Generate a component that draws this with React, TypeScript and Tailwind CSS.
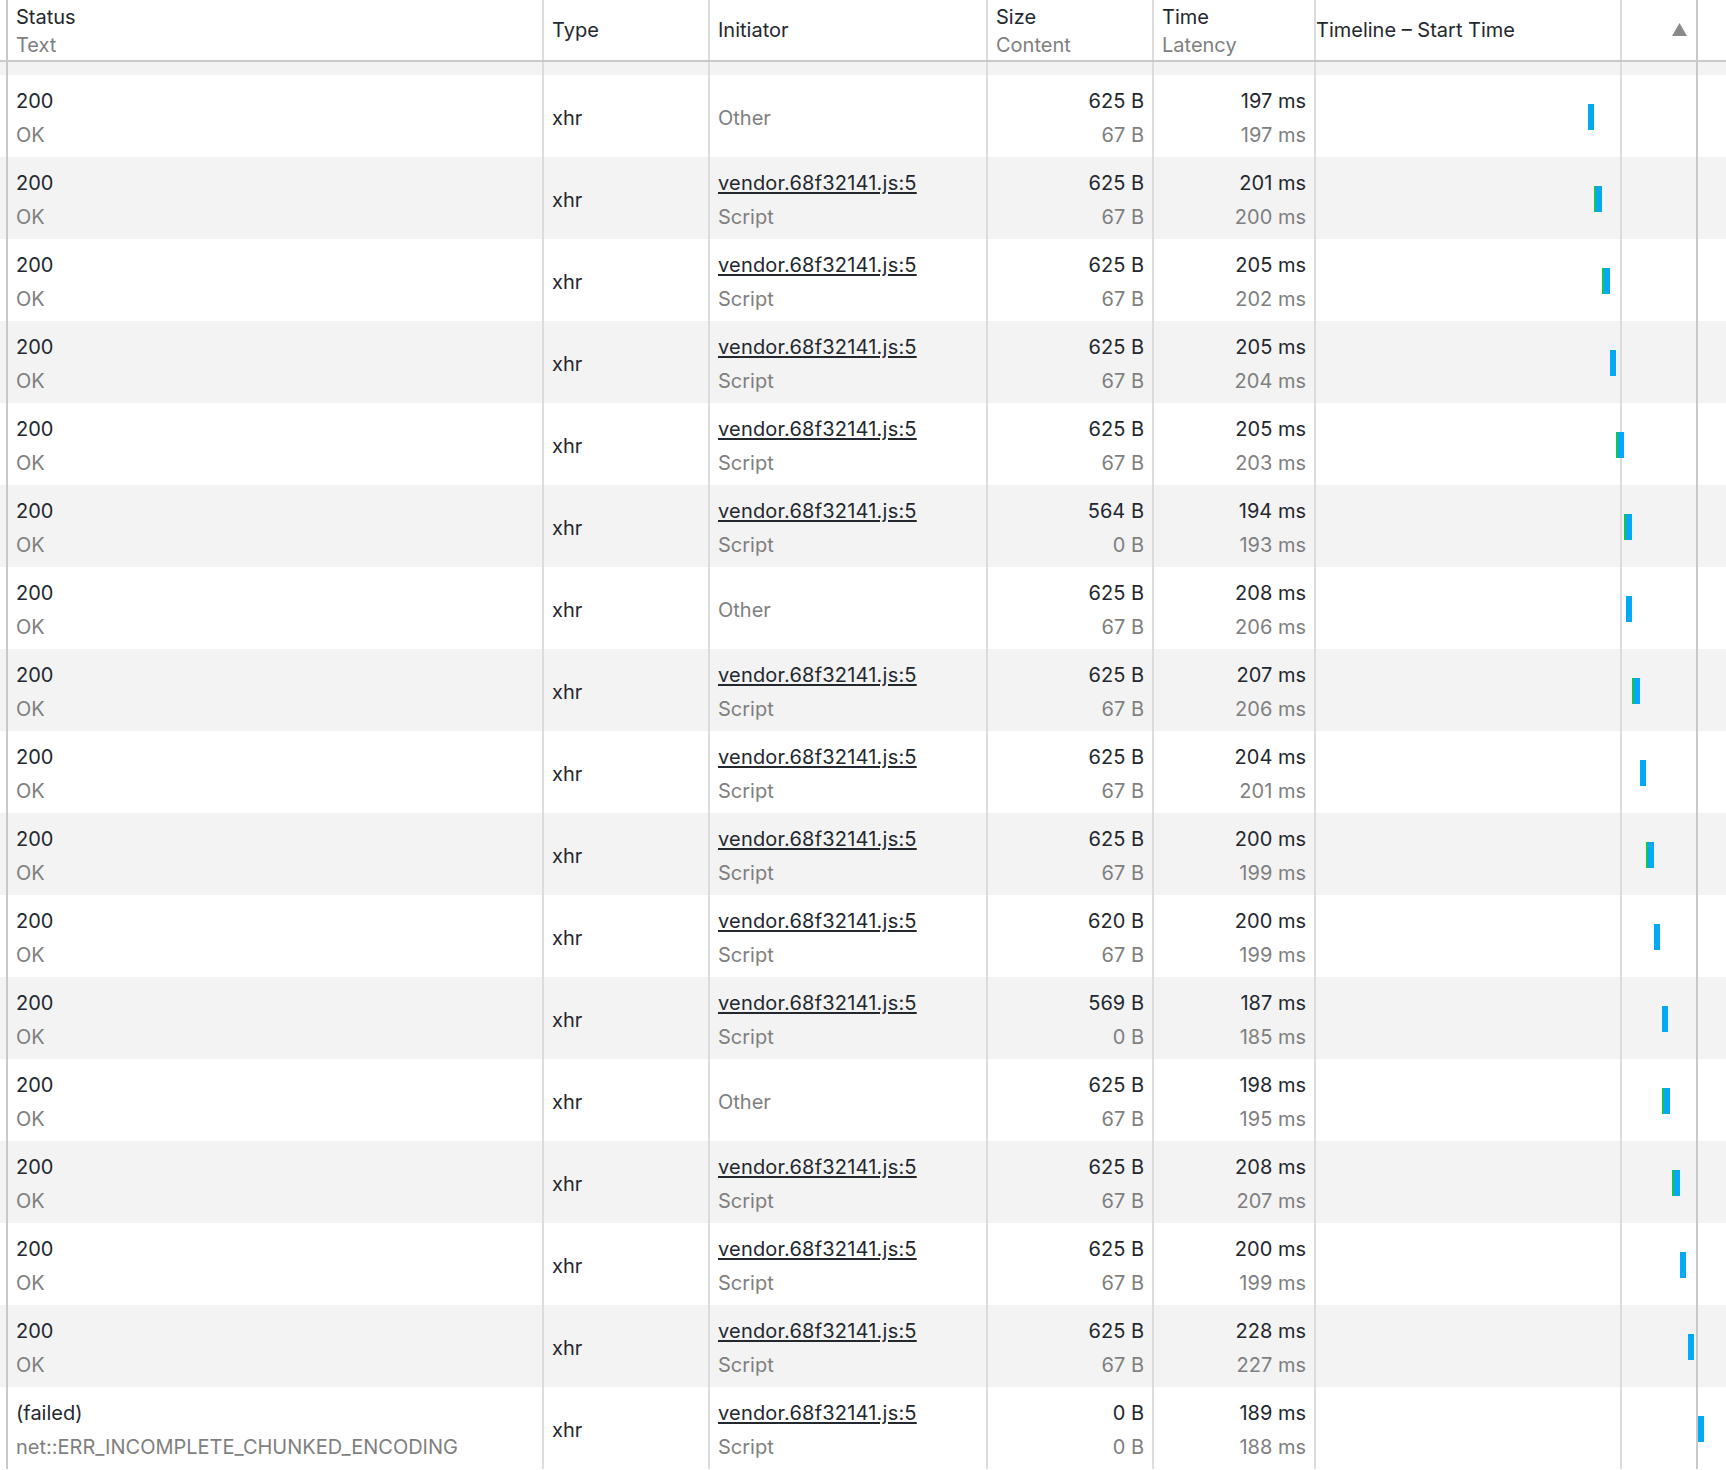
type Req = {
  status: string;
  text: string;
  other?: boolean;
  size: string;
  content: string;
  time: string;
  latency: string;
  x: number; // bar start, page px
  green: boolean;
};

const TIMELINE_LEFT = 1316;

const ROWS: Req[] = [
  { status: '200', text: 'OK', other: true, size: '625 B', content: '67 B', time: '197 ms', latency: '197 ms', x: 1588, green: false },
  { status: '200', text: 'OK', size: '625 B', content: '67 B', time: '201 ms', latency: '200 ms', x: 1594, green: true },
  { status: '200', text: 'OK', size: '625 B', content: '67 B', time: '205 ms', latency: '202 ms', x: 1602, green: true },
  { status: '200', text: 'OK', size: '625 B', content: '67 B', time: '205 ms', latency: '204 ms', x: 1610, green: false },
  { status: '200', text: 'OK', size: '625 B', content: '67 B', time: '205 ms', latency: '203 ms', x: 1616, green: true },
  { status: '200', text: 'OK', size: '564 B', content: '0 B', time: '194 ms', latency: '193 ms', x: 1624, green: true },
  { status: '200', text: 'OK', other: true, size: '625 B', content: '67 B', time: '208 ms', latency: '206 ms', x: 1626, green: false },
  { status: '200', text: 'OK', size: '625 B', content: '67 B', time: '207 ms', latency: '206 ms', x: 1632, green: true },
  { status: '200', text: 'OK', size: '625 B', content: '67 B', time: '204 ms', latency: '201 ms', x: 1640, green: false },
  { status: '200', text: 'OK', size: '625 B', content: '67 B', time: '200 ms', latency: '199 ms', x: 1646, green: true },
  { status: '200', text: 'OK', size: '620 B', content: '67 B', time: '200 ms', latency: '199 ms', x: 1654, green: false },
  { status: '200', text: 'OK', size: '569 B', content: '0 B', time: '187 ms', latency: '185 ms', x: 1662, green: false },
  { status: '200', text: 'OK', other: true, size: '625 B', content: '67 B', time: '198 ms', latency: '195 ms', x: 1662, green: true },
  { status: '200', text: 'OK', size: '625 B', content: '67 B', time: '208 ms', latency: '207 ms', x: 1672, green: true },
  { status: '200', text: 'OK', size: '625 B', content: '67 B', time: '200 ms', latency: '199 ms', x: 1680, green: false },
  { status: '200', text: 'OK', size: '625 B', content: '67 B', time: '228 ms', latency: '227 ms', x: 1688, green: false },
  { status: '(failed)', text: 'net::ERR_INCOMPLETE_CHUNKED_ENCODING', size: '0 B', content: '0 B', time: '189 ms', latency: '188 ms', x: 1696, green: true },
];

// the bottom of the row scrolled out above the first full one
function PartialRow() {
  return (
    <div className="flex h-[13px] shrink-0 bg-[#f3f3f3]">
      <div className="w-[8px] shrink-0 border-r-2 border-[#c9c9c9]" />
      <div className="w-[536px] shrink-0 border-r-2 border-[#dcdcdc]" />
      <div className="w-[166px] shrink-0 border-r-2 border-[#dcdcdc]" />
      <div className="w-[278px] shrink-0 border-r-2 border-[#dcdcdc]" />
      <div className="w-[166px] shrink-0 border-r-2 border-[#dcdcdc]" />
      <div className="w-[162px] shrink-0 border-r-2 border-[#dcdcdc]" />
      <div className="w-[306px] shrink-0 border-r-2 border-[#dcdcdc]" />
      <div className="w-[76px] shrink-0 border-r-2 border-[#c9c9c9]" />
      <div className="flex-1" />
    </div>
  );
}

function Row({ r, grey }: { r: Req; grey: boolean }) {
  return (
    <div className={`flex h-[82px] shrink-0 ${grey ? 'bg-[#f3f3f3]' : 'bg-white'}`}>
      <div className="w-[8px] shrink-0 border-r-2 border-[#c9c9c9]" />
      <div className="w-[536px] shrink-0 border-r-2 border-[#dcdcdc] pl-2 pt-[9px] leading-[34px]">
        <div className="text-[#23282e]">{r.status}</div>
        <div className="text-[#7f7f7f]">{r.text}</div>
      </div>
      <div className="w-[166px] shrink-0 border-r-2 border-[#dcdcdc] pl-2 pt-[26px] leading-[34px] text-[#23282e]">xhr</div>
      <div className="w-[278px] shrink-0 border-r-2 border-[#dcdcdc] pl-2 leading-[34px]">
        {r.other ? (
          <div className="pt-[26px] text-[#7f7f7f]">Other</div>
        ) : (
          <div className="pt-[9px]">
            <div className="text-[#23282e] underline decoration-2 underline-offset-2 tracking-[0.01em]">vendor.68f32141.js:5</div>
            <div className="text-[#7f7f7f]">Script</div>
          </div>
        )}
      </div>
      <div className="w-[166px] shrink-0 border-r-2 border-[#dcdcdc] pr-2 pt-[9px] text-right leading-[34px]">
        <div className="text-[#23282e]">{r.size}</div>
        <div className="text-[#7f7f7f]">{r.content}</div>
      </div>
      <div className="w-[162px] shrink-0 border-r-2 border-[#dcdcdc] pr-2 pt-[9px] text-right leading-[34px]">
        <div className="text-[#23282e]">{r.time}</div>
        <div className="text-[#7f7f7f]">{r.latency}</div>
      </div>
      <div className="relative flex flex-1">
        <div className="w-[306px] shrink-0 border-r-2 border-[#dcdcdc]" />
        <div className="absolute top-[29px] flex h-[26px]" style={{ left: r.x - TIMELINE_LEFT }}>
          {r.green && <div className="w-[2px] bg-[#14c64c]" />}
          <div className="w-[6px] bg-[#03a9f4]" />
        </div>
        <div className="relative z-10 w-[76px] shrink-0 border-r-2 border-[#c9c9c9]" />
        <div className="flex-1" />
      </div>
    </div>
  );
}

export default function App() {
  return (
    <div className="flex h-[1470px] w-[1726px] flex-col overflow-hidden bg-white font-['Inter',sans-serif] text-[20px]">
      {/* header */}
      <div className="flex h-[62px] shrink-0 border-b-2 border-[#c9c9c9] bg-white">
        <div className="w-[8px] shrink-0 border-r-2 border-[#c9c9c9]" />
        <div className="w-[536px] shrink-0 border-r-2 border-[#dcdcdc] pl-2 pt-[3px] leading-[28px]">
          <div className="text-[#23282e]">Status</div>
          <div className="text-[#7f7f7f]">Text</div>
        </div>
        <div className="w-[166px] shrink-0 border-r-2 border-[#dcdcdc] pl-2 pt-[16px] leading-[28px] text-[#23282e]">Type</div>
        <div className="w-[278px] shrink-0 border-r-2 border-[#dcdcdc] pl-2 pt-[16px] leading-[28px] text-[#23282e]">Initiator</div>
        <div className="w-[166px] shrink-0 border-r-2 border-[#dcdcdc] pl-2 pt-[3px] leading-[28px]">
          <div className="text-[#23282e]">Size</div>
          <div className="text-[#7f7f7f]">Content</div>
        </div>
        <div className="w-[162px] shrink-0 border-r-2 border-[#dcdcdc] pl-2 pt-[3px] leading-[28px]">
          <div className="text-[#23282e]">Time</div>
          <div className="text-[#7f7f7f]">Latency</div>
        </div>
        <div className="w-[306px] shrink-0 border-r-2 border-[#dcdcdc] pt-[16px] leading-[28px] text-[#23282e]">Timeline – Start Time</div>
        <div className="flex w-[76px] shrink-0 justify-end border-r-2 border-[#c9c9c9] pr-[9px] pt-[23px]">
          <svg width="15" height="13" viewBox="0 0 15 13">
            <polygon points="7.5,0 15,13 0,13" fill="#8a8a8a" />
          </svg>
        </div>
        <div className="flex-1" />
      </div>
      {/* body */}
      <div className="flex flex-1 flex-col overflow-hidden">
        <PartialRow />
        {ROWS.map((r, i) => (
          <Row key={i} r={r} grey={i % 2 === 1} />
        ))}
      </div>
    </div>
  );
}
